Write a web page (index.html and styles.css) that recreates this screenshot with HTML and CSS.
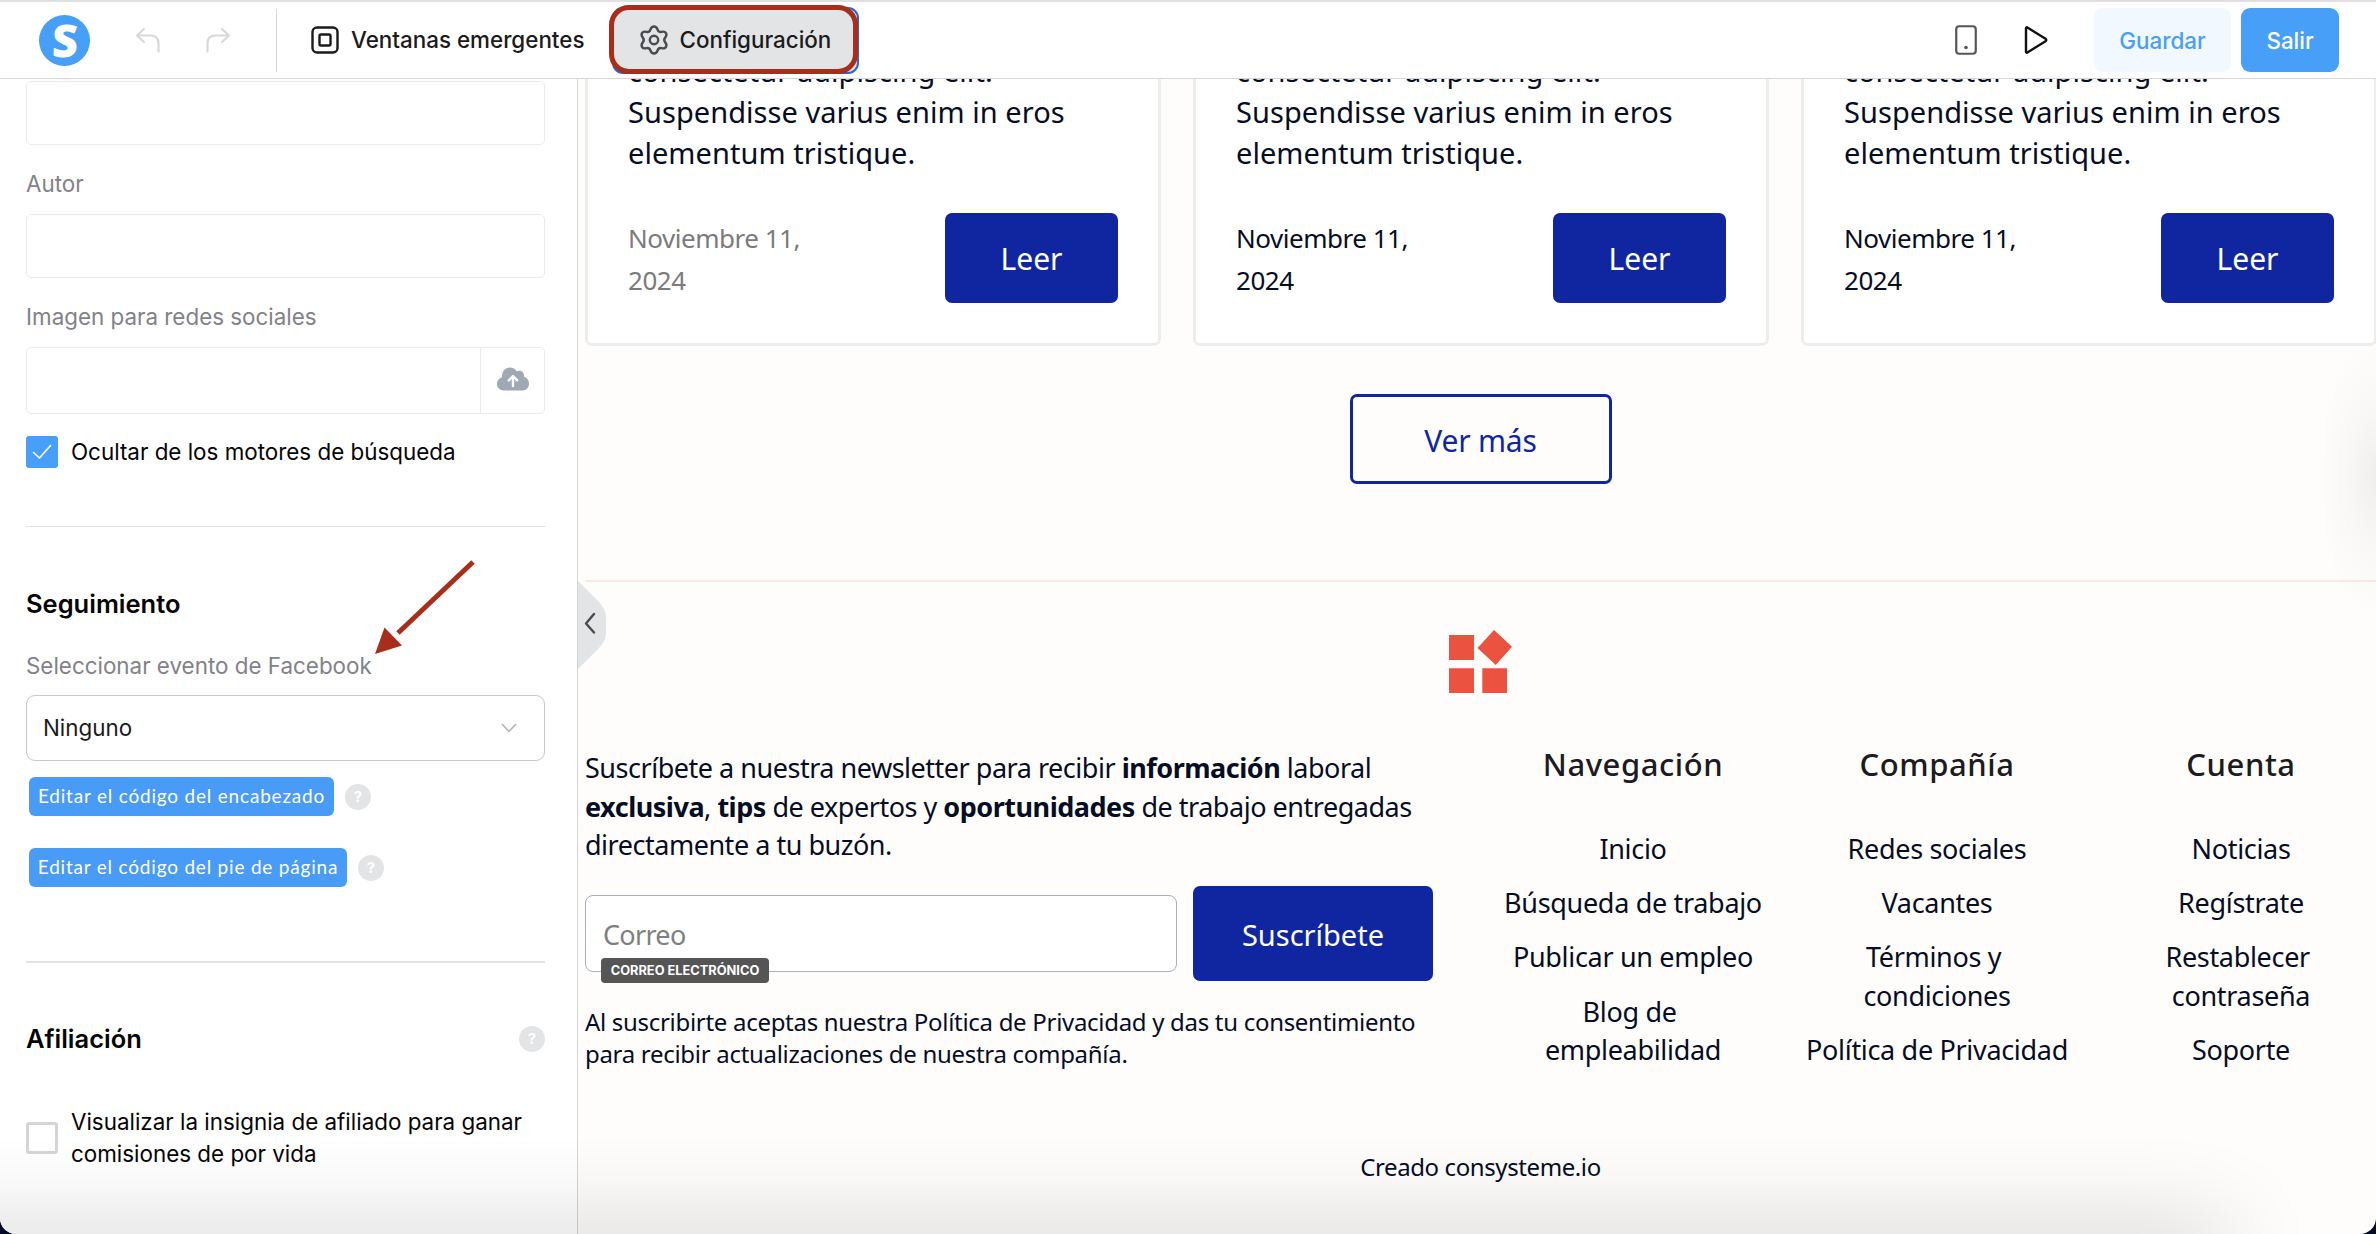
FILE: index.html
```html
<!DOCTYPE html>
<html lang="es">
<head>
    <meta charset="UTF-8">
    <meta name="viewport" content="width=device-width, initial-scale=1.0">
    <title>Configuración</title>
    <link rel="stylesheet" href="styles.css">
</head>
<body>
    <header class="topbar">
        <div class="logo"><span>S</span></div>
        <div class="history">
            <svg width="26" height="26" viewBox="0 0 26 26"><path d="M9 2L2 8.500L9 15M2.500 8.500H15.500Q23.500 8.500 23.500 16.500V24.500"/></svg>
            <svg width="26" height="26" viewBox="0 0 26 26"><path d="M17 2L24 8.500L17 15M23.500 8.500H10.500Q2.500 8.500 2.500 16.500V24.500"/></svg>
        </div>
        <div class="tool popups">
            <svg width="28" height="28" viewBox="0 0 28 28"><rect x="1.500" y="1.500" width="25" height="25" rx="4.500"/><rect x="8.500" y="8.500" width="11" height="11" rx="1.500"/></svg>
            <span>Ventanas emergentes</span>
        </div>
        <div class="tool settings">
            <svg width="30" height="30" viewBox="0 0 30 30"><path d="M15 1.500C17.500 1.500 18 3 18.600 4.600C19.300 6.600 20.700 7.300 22.600 6.800C24.600 6.300 26 6.400 27 8.200C28 10 27.400 11.200 26.200 12.600C24.900 14.200 24.900 15.800 26.200 17.400C27.400 18.800 28 20 27 21.800C26 23.600 24.600 23.700 22.600 23.200C20.700 22.700 19.300 23.400 18.600 25.400C18 27 17.500 28.500 15 28.500C12.500 28.500 12 27 11.400 25.400C10.700 23.400 9.300 22.700 7.400 23.200C5.400 23.700 4 23.600 3 21.800C2 20 2.600 18.800 3.800 17.400C5.100 15.800 5.100 14.200 3.800 12.600C2.600 11.200 2 10 3 8.200C4 6.400 5.400 6.300 7.400 6.800C9.300 7.300 10.700 6.600 11.400 4.600C12 3 12.500 1.500 15 1.500Z"/><circle cx="15" cy="15" r="4.200"/></svg>
            <span>Configuración</span>
            <div class="marker"></div>
        </div>
        <div class="actions">
            <svg class="phone" width="22" height="30" viewBox="0 0 22 30"><rect x="1.250" y="1.250" width="19.500" height="27.500" rx="3"/><circle cx="11" cy="22.500" r="1.800"/></svg>
            <svg class="play" width="24" height="30" viewBox="0 0 24 30"><path d="M2 3.200V26.800Q2.300 28.300 3.800 27.300L21.500 16.300Q23 15 21.500 13.700L3.800 2.700Q2.300 1.700 2 3.200Z"/></svg>
            <button class="btn btn-save">Guardar</button>
            <button class="btn btn-exit">Salir</button>
        </div>
    </header>

    <main class="editor">
        <aside class="sidebar">
            <div class="field"></div>
            <label class="label">Autor</label>
            <div class="field"></div>
            <label class="label">Imagen para redes sociales</label>
            <div class="field field-upload">
                <div class="upload">
                    <svg width="34" height="24" viewBox="0 0 34 24"><path class="cloud" d="M8 23.500C3.500 23.500 1 20.500 1 17C1 13.500 3 11.200 6 10.300C5.800 4.500 9 .500 14 .500C17 .500 19.300 2 20.600 4.300C24 2.500 28.500 4.500 28 9.800C31.300 10.600 33 13.300 33 16.500C33 20.500 30.300 23.500 26.500 23.500Z"/><path class="up" d="M17 19V9.500M12.800 13.300L17 9L21.200 13.300"/></svg>
                </div>
            </div>
            <div class="check">
                <span class="box checked"><svg width="20" height="16" viewBox="0 0 20 16"><path d="M1.500 8.500L7.500 14L18.500 1.500"/></svg></span>
                <span>Ocultar de los motores de búsqueda</span>
            </div>

            <hr class="rule">

            <h2 class="section-title">Seguimiento</h2>
            <label class="label label-event">Seleccionar evento de Facebook</label>
            <div class="select">
                <span>Ninguno</span>
                <svg width="16" height="10" viewBox="0 0 16 10"><path d="M1.500 1.500L8 8.500L14.500 1.500"/></svg>
            </div>
            <div class="code-row">
                <button class="code-btn">Editar el código del encabezado</button>
                <span class="help">?</span>
            </div>
            <div class="code-row">
                <button class="code-btn footer-code">Editar el código del pie de página</button>
                <span class="help">?</span>
            </div>

            <hr class="rule rule-thick">

            <div class="section-head">
                <h2 class="section-title">Afiliación</h2>
                <span class="help">?</span>
            </div>
            <div class="check check-badge">
                <span class="box"></span>
                <span>Visualizar la insignia de afiliado para ganar<br>comisiones de por vida</span>
            </div>

            <svg class="arrow" width="104" height="98" viewBox="0 0 104 98"><path class="shaft" d="M99 4L24 75"/><path class="head" d="M1 96L10.500 69.500L28 87.500Z"/></svg>
        </aside>

        <section class="canvas">
            <div class="cards">
                <article class="card">
                    <p class="card-text">consectetur adipiscing elit.<br>Suspendisse varius enim in eros<br>elementum tristique.</p>
                    <div class="card-foot">
                        <p class="date muted">Noviembre 11,<br>2024</p>
                        <a class="read">Leer</a>
                    </div>
                </article>
                <article class="card">
                    <p class="card-text">consectetur adipiscing elit.<br>Suspendisse varius enim in eros<br>elementum tristique.</p>
                    <div class="card-foot">
                        <p class="date">Noviembre 11,<br>2024</p>
                        <a class="read">Leer</a>
                    </div>
                </article>
                <article class="card">
                    <p class="card-text">consectetur adipiscing elit.<br>Suspendisse varius enim in eros<br>elementum tristique.</p>
                    <div class="card-foot">
                        <p class="date">Noviembre 11,<br>2024</p>
                        <a class="read">Leer</a>
                    </div>
                </article>
            </div>
            <a class="more">Ver más</a>

            <footer class="site-footer">
                <svg class="brand" width="64" height="64" viewBox="0 0 64 64"><path d="M0 5H25V30H0ZM0 38.300H25V63H0ZM33.300 38.300H58V63H33.300ZM45 0L63 16.700L46.700 35L28.500 18Z"/></svg>
                <div class="footer-grid">
                    <div class="newsletter">
                        <p class="lead">Suscríbete a nuestra newsletter para recibir <b>información</b> laboral<br><b>exclusiva</b>, <b>tips</b> de expertos y <b>oportunidades</b> de trabajo entregadas<br>directamente a tu buzón.</p>
                        <div class="form">
                            <div class="email">Correo<span class="email-tag">CORREO ELECTRÓNICO</span></div>
                            <a class="subscribe">Suscríbete</a>
                        </div>
                        <p class="terms">Al suscribirte aceptas nuestra Política de Privacidad y das tu consentimiento<br>para recibir actualizaciones de nuestra compañía.</p>
                    </div>
                    <nav class="links">
                        <h3>Navegación</h3>
                        <a>Inicio</a>
                        <a>Búsqueda de trabajo</a>
                        <a>Publicar un empleo</a>
                        <a>Blog de&nbsp;<br>empleabilidad</a>
                    </nav>
                    <nav class="links">
                        <h3>Compañía</h3>
                        <a>Redes sociales</a>
                        <a>Vacantes</a>
                        <a>Términos y&nbsp;<br>condiciones</a>
                        <a>Política de Privacidad</a>
                    </nav>
                    <nav class="links">
                        <h3>Cuenta</h3>
                        <a>Noticias</a>
                        <a>Regístrate</a>
                        <a>Restablecer&nbsp;<br>contraseña</a>
                        <a>Soporte</a>
                    </nav>
                </div>
                <p class="credit">Creado consysteme.io</p>
            </footer>

            <svg class="collapse" width="29" height="90" viewBox="0 0 29 90"><path class="tab" d="M0 0L20.500 20.500Q28 28 28 37V52Q28 60 20.500 67.500L0 88Z"/><path class="chevron" d="M16 33L8 42.500L16 51.500"/></svg>
            <div class="side-shade"></div>
        </section>
        <div class="bottom-shade"></div>
    </main>
</body>
</html>
```

FILE: styles.css
```css
* {
    box-sizing: border-box;
}

body {
    margin: 0;
    height: 1234px;
    overflow: hidden;
    display: flex;
    flex-direction: column;
    background: #020b2a;
    font-family: Inter, sans-serif;
    font-size: 22.4px;
    line-height: 32px;
    color: #111;
    white-space: nowrap;
}

p, h2, h3 {
    margin: 0;
}

svg {
    display: block;
    fill: none;
    stroke-linecap: round;
    stroke-linejoin: round;
}

button {
    border: none;
    font-family: inherit;
    font-size: inherit;
    padding: 0;
}

/* Top bar */
.topbar {
    height: 79px;
    flex: none;
    display: flex;
    align-items: center;
    background: #fff;
    border-top: 2px solid #e0e0e0;
    border-bottom: 1px solid #d6d7d9;
    padding: 0 37px 0 39px;
}

.logo {
    width: 51px;
    height: 51px;
    border-radius: 50%;
    background: #479ff8;
    color: #fff;
    font: 800 45px/50px "Open Sans", sans-serif;
    text-align: center;
}

.logo span {
    display: inline-block;
    transform: skewX(-2deg);
}

.history {
    display: flex;
    gap: 44px;
    height: 63px;
    align-items: center;
    margin-left: 45px;
    padding-right: 45px;
    border-right: 1px solid #d6d7d9;
}

.history svg {
    stroke: #d9d9db;
    stroke-width: 2.2;
}

.tool {
    display: flex;
    align-items: center;
    font-weight: 500;
    color: #1b1b1c;
}

.tool svg {
    stroke: #1b1b1c;
    stroke-width: 2.4;
}

.popups {
    gap: 12px;
    margin-left: 34px;
}

.settings {
    position: relative;
    width: 247px;
    height: 67px;
    gap: 10px;
    margin-left: 28px;
    padding-left: 25px;
    border: 2px solid #2b66cf;
    border-radius: 11px;
    background: #e3e4e6;
}

.settings svg {
    stroke: #4a4b4e;
}

.marker {
    position: absolute;
    left: -5px;
    top: -4px;
    width: 249px;
    height: 69px;
    border: 5px solid #a82d1a;
    border-radius: 20px;
}

.actions {
    display: flex;
    align-items: center;
    margin-left: auto;
}

.phone {
    stroke: #55565a;
    stroke-width: 2.2;
}

.phone circle {
    fill: #55565a;
    stroke: none;
}

.play {
    stroke: #111;
    stroke-width: 2.4;
    margin: 0 46px 0 47px;
}

.btn {
    height: 64px;
    border-radius: 9px;
    font-weight: 500;
}

.btn-save {
    width: 137px;
    background: #f1f8ff;
    color: #479ff8;
}

.btn-exit {
    width: 98px;
    margin-left: 10px;
    background: #479ff8;
    color: #fff;
}

.editor {
    position: relative;
    flex: 1;
    min-height: 0;
    display: flex;
    overflow: hidden;
    background: #fefdfb;
    border-radius: 0 0 16px 16px;
}

/* Settings panel */
.sidebar {
    position: relative;
    width: 578px;
    flex: none;
    padding: 2px 32px 0 26px;
    background: #fff;
    border-right: 1px solid #d3d4d6;
}

.field {
    height: 64px;
    border: 1px solid #ebebee;
    border-radius: 5px;
}

.label {
    display: block;
    margin: 23px 0 14px;
    color: #828289;
}

.field-upload {
    height: 67px;
    display: flex;
    justify-content: flex-end;
}

.upload {
    width: 64px;
    display: flex;
    align-items: center;
    justify-content: center;
    padding-bottom: 3px;
    border-left: 1px solid #ebebee;
}

.cloud {
    fill: #9fa9b3;
}

.up {
    stroke: #fff;
    stroke-width: 2.4;
}

.check {
    display: flex;
    align-items: center;
    gap: 13px;
    margin-top: 22px;
    color: #050505;
}

.box {
    width: 32px;
    height: 32px;
    flex: none;
    display: flex;
    align-items: center;
    justify-content: center;
    border: 3px solid #d5d5d6;
    border-radius: 3px;
}

.box.checked {
    background: #479ff8;
    border: none;
}

.box svg {
    stroke: #fff;
    stroke-width: 1.6;
}

.rule {
    margin: 58px 0 61px;
    border: none;
    border-top: 1px solid #dfdfe1;
}

.rule-thick {
    margin: 74px 0 60px;
    border-top: 2px solid #e2e3e4;
}

.section-title {
    font-size: 25.5px;
    font-weight: 600;
    line-height: 32px;
    color: #050505;
}

.label-event {
    margin: 30px 0 13px;
}

.select {
    height: 66px;
    display: flex;
    align-items: center;
    justify-content: space-between;
    padding: 0 27px 0 16px;
    border: 1px solid #c9c9cb;
    border-radius: 9px;
    color: #1b1b1c;
}

.select svg {
    stroke: #b3b3b7;
    stroke-width: 1.6;
}

.code-row {
    display: flex;
    align-items: center;
    gap: 11px;
    margin: 16px 0 0 3px;
}

.code-row + .code-row {
    margin-top: 32px;
}

.code-btn {
    width: 305px;
    height: 39px;
    padding-bottom: 3px;
    border-radius: 6px;
    background: #489bf6;
    color: #fff;
    font-family: Lato, sans-serif;
    font-size: 19px;
    letter-spacing: 0.8px;
}

.footer-code {
    width: 318px;
}

.help {
    width: 26px;
    height: 26px;
    border-radius: 50%;
    background: #e3e4e6;
    color: #fff;
    font-size: 15px;
    font-weight: 700;
    line-height: 26px;
    text-align: center;
}

.section-head {
    display: flex;
    align-items: center;
    justify-content: space-between;
}

.check-badge {
    margin-top: 51px;
}

.arrow {
    position: absolute;
    left: 374px;
    top: 479px;
}

.shaft {
    stroke: #a82d1a;
    stroke-width: 5;
    stroke-linecap: butt;
}

.head {
    fill: #a82d1a;
}

/* Page being edited */
.canvas {
    position: relative;
    flex: 1;
    min-width: 0;
    padding-left: 7px;
    overflow: hidden;
    font-family: "Noto Sans", sans-serif;
    color: #050d24;
}

.cards {
    display: grid;
    grid-template-columns: repeat(3, 576px);
    gap: 32px;
    margin-top: -29px;
}

.card {
    padding: 0 40px 40px;
    background: #fff;
    border: 3px solid #ededed;
    border-top: none;
    border-radius: 0 0 7px 7px;
}

.card-text {
    font-size: 29px;
    line-height: 41px;
    letter-spacing: 0.05px;
}

.card-foot {
    display: flex;
    align-items: center;
    justify-content: space-between;
    margin-top: 40px;
}

.date {
    padding-top: 2px;
    font-size: 26px;
    line-height: 42px;
    letter-spacing: -0.48px;
}

.date.muted {
    color: #7b7b7d;
}

.read {
    width: 173px;
    height: 90px;
    border-radius: 7px;
    background: #0f26a0;
    color: #fff;
    font-size: 30px;
    line-height: 92px;
    text-align: center;
}

.more {
    display: block;
    width: 262px;
    height: 90px;
    margin: 48px auto 96px;
    border: 3px solid #0f26a0;
    border-radius: 7px;
    color: #0f26a0;
    font-size: 30px;
    line-height: 88px;
    letter-spacing: -0.2px;
    text-align: center;
}

.site-footer {
    border-top: 2px solid #fbe9e7;
    padding-top: 48px;
}

.brand {
    margin: 0 auto 48px;
    fill: #eb5340;
}

.footer-grid {
    display: grid;
    grid-template-columns: 880px repeat(3, 272px);
    column-gap: 32px;
}

.newsletter {
    padding-top: 7px;
}

.lead {
    font-size: 27px;
    line-height: 38.5px;
    letter-spacing: -0.48px;
}

.form {
    display: flex;
    align-items: center;
    gap: 16px;
    margin: 21px 0 25px;
}

.email {
    position: relative;
    width: 592px;
    height: 77px;
    padding-left: 17px;
    border: 1px solid #a9afbd;
    border-radius: 8px;
    background: #fff;
    color: #7f7f7f;
    font-size: 27px;
    letter-spacing: -0.7px;
    line-height: 78px;
}

.email-tag {
    position: absolute;
    left: 15px;
    top: 62px;
    width: 168px;
    height: 25px;
    border-radius: 4px;
    background: #555;
    color: #fff;
    font: 700 12.8px/26px Inter, sans-serif;
    letter-spacing: 0;
    text-align: center;
}

.subscribe {
    width: 240px;
    height: 95px;
    border-radius: 7px;
    background: #0f26a0;
    color: #fff;
    font-size: 29px;
    line-height: 97px;
    text-align: center;
}

.terms {
    font-size: 24px;
    line-height: 32px;
    letter-spacing: -0.3px;
}

.links {
    display: flex;
    flex-direction: column;
    align-items: center;
    gap: 16px;
    font-size: 27px;
    line-height: 38.4px;
    letter-spacing: -0.32px;
    text-align: center;
}

.links h3 {
    margin-bottom: 27.5px;
    font-size: 31px;
    font-weight: 500;
    letter-spacing: 0.55px;
    line-height: 44px;
    color: #1b1b22;
}

.credit {
    margin-top: 81px;
    font-size: 24px;
    letter-spacing: -0.4px;
    text-align: center;
}

.collapse {
    position: absolute;
    left: 0;
    top: 502px;
}

.tab {
    fill: #e3e4e6;
}

.chevron {
    stroke: #4a4b4e;
    stroke-width: 2.4;
}

/* Soft shadows of panels parked off screen */
.side-shade {
    position: absolute;
    right: 0;
    top: 250px;
    width: 60px;
    height: 296px;
    background: radial-gradient(ellipse 60px 140px at 100% 50%, rgba(0, 0, 0, 0.06), rgba(0, 0, 0, 0.022) 45%, transparent);
}

.bottom-shade {
    position: absolute;
    left: -100px;
    right: 150px;
    bottom: -30px;
    height: 30px;
    box-shadow: 0 0 90px rgba(0, 0, 0, 0.3);
}
```
